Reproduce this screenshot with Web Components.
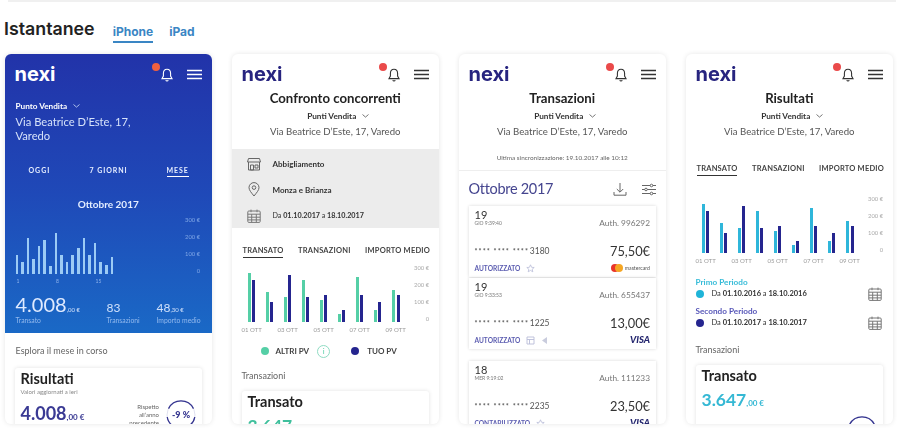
<!DOCTYPE html>
<html lang="it">
<head>
<meta charset="utf-8">
<title>Istantanee</title>
<style>
  html, body { margin: 0; background: #fff; }
  body { font-family: Lato, "Open Sans", sans-serif; width: 900px; height: 441px; overflow: hidden; }
  .hero { background: linear-gradient(180deg, #2233a9 0%, #1f49b8 50%, #1a69c6 100%); color: #fff; height: 279px; }
</style>
</head>
<body>
<shots-page>
  <shot-card>
    <div class="hero">
      <app-head dark></app-head>
      <hero-summary></hero-summary>
    </div>
    <section-label top="12" left="11">Esplora il mese in corso</section-label>
    <result-card top="11" title="Risultati" sub="Valori aggiornati a ieri" value="4.008" cents=",00 €" colour="#3a3a94" size="18" delta></result-card>
  </shot-card>

  <shot-card>
    <app-head></app-head>
    <store-head title="Confronto concorrenti"></store-head>
    <filter-band></filter-band>
    <metric-tabs top="16"></metric-tabs>
    <pair-chart top="4" colour="#55cfa6"></pair-chart>
    <chart-legend></chart-legend>
    <section-label top="12" left="10">Transazioni</section-label>
    <result-card top="9" title="Transato" value="3.647" cents=",00 €" colour="#3fbf9c" size="17.5"></result-card>
  </shot-card>

  <shot-card>
    <app-head></app-head>
    <store-head title="Transazioni"></store-head>
    <sync-bar></sync-bar>
    <month-title></month-title>
    <txn-card day="19" time="GIO 9:39:40" auth="Auth. 996292" pan="3180" amount="75,50€" status="AUTORIZZATO" brand="mc"></txn-card>
    <txn-card day="19" time="GIO 9:33:53" auth="Auth. 655437" pan="1225" amount="13,00€" status="AUTORIZZATO" brand="visa" top="1" extra></txn-card>
    <txn-card day="18" time="MER 9:19:02" auth="Auth. 111233" pan="2235" amount="23,50€" status="CONTABILIZZATO" brand="visa" top="12"></txn-card>
  </shot-card>

  <shot-card>
    <app-head></app-head>
    <store-head title="Risultati"></store-head>
    <metric-tabs top="23"></metric-tabs>
    <pair-chart top="17" colour="#2fb6da"></pair-chart>
    <period-list></period-list>
    <section-label top="14" left="10">Transazioni</section-label>
    <result-card top="9" title="Transato" value="3.647" cents=",00 €" colour="#35b8d4" size="17.5" ring></result-card>
  </shot-card>
</shots-page>

<script>
const CAL = `<svg width="14" height="14" viewBox="0 0 14 14" fill="none" stroke="#777" stroke-width="1"><rect x=".8" y="2" width="12.4" height="11.4" rx="1"/><path d="M.8 5.2h12.4M4 .6v2.6M10 .6v2.6M4.7 5.2v8.2M9.3 5.2v8.2M.8 8.2h12.4M.8 10.9h12.4"/></svg>`;
const chev = c => `<svg width="7" height="4" viewBox="0 0 7 4" fill="none" stroke="${c}" stroke-width=".8" style="margin-left:6px;vertical-align:1px"><path d="M.5.5l3 2.6 3-2.6"/></svg>`;

class ShotsPage extends HTMLElement{
  constructor(){
    super();
    this.attachShadow({mode:'open'});
    this.shadowRoot.innerHTML = `
    <style>
      :host { display: block; }
      .top { height: 2px; margin-left: 8px; margin-right: 4px; background: #f0f0f0; }
      header { display: flex; align-items: center; height: 36px; margin-top: 9px; padding-left: 4px; }
      h1 { margin: 0; font: 600 17.8px/36px Inter, sans-serif; color: #222; }
      nav { display: flex; gap: 16px; margin-left: 18px; margin-top: 8px; }
      a { font: 700 12px/16px Inter, sans-serif; color: #3a86c4; padding-bottom: 1px; border-bottom: 2px solid transparent; }
      a.on { border-bottom-color: #3a86c4; }
      .row { display: flex; gap: 19.5px; margin-top: 7px; padding-left: 4.5px; }
    </style>
    <div class="top"></div>
    <header><h1>Istantanee</h1><nav><a class="on">iPhone</a><a>iPad</a></nav></header>
    <div class="row"><slot></slot></div>`;
  }
}
customElements.define('shots-page', ShotsPage);

class ShotCard extends HTMLElement{
  constructor(){
    super();
    this.attachShadow({mode:'open'});
    this.shadowRoot.innerHTML = `
    <style>
      :host { display: block; flex: none; width: 207.5px; height: 370px; overflow: hidden; border-radius: 6px; background: #fff;
              box-shadow: 0 0 5px rgba(0,0,0,.10); color: #333; filter: blur(.35px); }
    </style>
    <slot></slot>`;
  }
}
customElements.define('shot-card', ShotCard);

class AppHead extends HTMLElement{
  constructor(){
    super();
    this.attachShadow({mode:'open'});
  }
  connectedCallback(){
    const dark = this.hasAttribute('dark');
    const ink = dark ? '#fff' : '#333';
    this.shadowRoot.innerHTML = `
    <style>
      :host { display: flex; align-items: center; height: 36px; box-sizing: border-box; padding: 3px 10px 0 10px; }
      .logo { font: 700 20px/22px Inter, sans-serif; color: ${dark ? '#fff' : '#27247f'}; }
      .bell { position: relative; margin-left: auto; margin-right: 14px; width: 12px; height: 14px; margin-top: 2px; }
      .bell i { position: absolute; left: -9px; top: -5px; width: 8px; height: 8px; border-radius: 50%; background: ${dark ? '#f0603f' : '#ea4a4a'}; }
      svg { display: block; }
      .burger { margin-top: 1px; }
    </style>
    <span class="logo">nexi</span>
    <span class="bell"><svg width="12" height="14" viewBox="0 0 12 14" fill="none" stroke="${ink}" stroke-width="1.1"><path d="M6 1.2c-2.4 0-3.6 1.9-3.6 4.2v2.7L1 10.6h10L9.6 8.1V5.4C9.6 3.1 8.4 1.2 6 1.2zM4.7 12.3c.6 1 2 1 2.6 0"/></svg><i></i></span>
    <svg class="burger" width="15" height="11" viewBox="0 0 15 11" stroke="${ink}" stroke-width="1.7"><path d="M0 1.5h15M0 5.5h15M0 9.5h15"/></svg>`;
  }
}
customElements.define('app-head', AppHead);

class StoreHead extends HTMLElement{
  constructor(){
    super();
    this.attachShadow({mode:'open'});
  }
  connectedCallback(){
    this.shadowRoot.innerHTML = `
    <style>
      :host { display: block; text-align: center; }
      h2 { margin: 0; font: 700 13.2px/16px Lato, sans-serif; color: #222; }
      .pv { margin-top: 4px; font: 700 8.2px/12px Lato, sans-serif; color: #333; padding-left: 6px; }
      .ad { margin-top: 3px; font: 400 9.6px/14px Lato, sans-serif; color: #555; }
    </style>
    <h2>${this.getAttribute('title')}</h2>
    <div class="pv">Punti Vendita${chev('#555')}</div>
    <div class="ad">Via Beatrice D’Este, 17, Varedo</div>`;
  }
}
customElements.define('store-head', StoreHead);

class MonthBars extends HTMLElement{
  constructor(){
    super();
    this.attachShadow({mode:'open'});
    const h = [19,12,36,15,28,34,8,41,19,12,19,26,36,19,31,12,9,17];
    this.shadowRoot.innerHTML = `
    <style>
      :host { display: flex; align-items: flex-end; gap: 3.1px; height: 60px; }
      i { display: block; width: 2.5px; background: #9ccbf5; }
    </style>
    ${h.map(v => `<i style="height:${v}px"></i>`).join('')}`;
  }
}
customElements.define('month-bars', MonthBars);

class YAxis extends HTMLElement{
  constructor(){
    super();
    this.attachShadow({mode:'open'});
    this.shadowRoot.innerHTML = `
    <style>
      :host { display: flex; flex-direction: column; gap: 9px; padding-top: 2px; height: 60px; box-sizing: border-box;
              margin-left: auto; text-align: right; font: 400 5.8px/8px Lato, sans-serif; color: inherit; }
    </style>
    <span>300 €</span><span>200 €</span><span>100 €</span><span>0</span>`;
  }
}
customElements.define('y-axis', YAxis);

class HeroSummary extends HTMLElement{
  constructor(){
    super();
    this.attachShadow({mode:'open'});
    this.shadowRoot.innerHTML = `
    <style>
      :host { display: block; }
      .pv { margin: 10px 0 0 11px; font: 700 8.2px/12px Lato, sans-serif; }
      .ad { margin: 3px 0 0 11px; font: 400 11.2px/14px Lato, sans-serif; color: #d6e2fa; }
      .tabs { display: flex; margin: 21px 0 0 0; font: 700 7px/12px Lato, sans-serif; letter-spacing: .95px; padding-left: 24px; color: #e6eeff; }
      .tabs span:nth-child(1) { width: 61px; }
      .tabs span:nth-child(2) { width: 77px; }
      .tabs span:nth-child(3) { border-bottom: 1px solid #fff; height: 12px; }
      .mon { margin-top: 20px; text-align: center; font: 700 10px/14px Lato, sans-serif; color: #e3edff; }
      .plot { display: flex; margin-top: 3px; padding: 0 12px 0 11px; color: #7fa6e6; }
      .days { height: 8px; margin-top: 3px; font: 400 5px/8px Lato, sans-serif; color: #8fb4ec; display: flex; padding-left: 12px; }
      .days span { width: 39.5px; }
      .nums { display: flex; align-items: baseline; margin-top: 7px; padding-left: 11px; font: 400 12px/24px Lato, sans-serif; color: #cfe0fb; height: 24px; }
      .nums b { font: 400 20px/24px Lato, sans-serif; color: #dfeaff; }
      small { font-size: 6px; }
      .nums .a { width: 91px; } .nums .b { width: 50px; }
      .labs { display: flex; padding-left: 11px; font: 400 6.8px/8px Lato, sans-serif; color: #92b9ee; }
      .labs .a { width: 91px; } .labs .b { width: 50px; }
    </style>
    <div class="pv">Punto Vendita${chev('#cfe0fb')}</div>
    <div class="ad">Via Beatrice D’Este, 17,<br>Varedo</div>
    <div class="tabs"><span>OGGI</span><span>7 GIORNI</span><span>MESE</span></div>
    <div class="mon">Ottobre 2017</div>
    <div class="plot"><month-bars></month-bars><y-axis></y-axis></div>
    <div class="days"><span>1</span><span>8</span><span>15</span></div>
    <div class="nums"><span class="a"><b>4.008</b><small>,00 €</small></span><span class="b">83</span><span>48<small>,30 €</small></span></div>
    <div class="labs"><span class="a">Transato</span><span class="b">Transazioni</span><span>Importo medio</span></div>`;
  }
}
customElements.define('hero-summary', HeroSummary);

class SectionLabel extends HTMLElement{
  constructor(){
    super();
    this.attachShadow({mode:'open'});
  }
  connectedCallback(){
    this.shadowRoot.innerHTML = `
    <style>
      :host { display: block; margin: ${this.getAttribute('top')}px 0 0 ${this.getAttribute('left')}px; font: 400 9px/12px Lato, sans-serif; color: #666; }
    </style>
    <slot></slot>`;
  }
}
customElements.define('section-label', SectionLabel);

class ResultCard extends HTMLElement{
  constructor(){
    super();
    this.attachShadow({mode:'open'});
  }
  connectedCallback(){
    const a = n => this.getAttribute(n);
    const delta = this.hasAttribute('delta');
    const ring = `<svg width="30" height="30" viewBox="0 0 30 30" fill="none"><circle cx="15" cy="15" r="14" stroke="#dfe0ef"/><path d="M2.5 8.6A14 14 0 0 1 27.5 8.6" stroke="#34348f" stroke-width="1.3"/>${delta ? '<path d="M1.2 17A14 14 0 0 0 28.8 17" stroke="#34348f" stroke-width="1.3"/>' : ''}</svg>`;
    this.shadowRoot.innerHTML = `
    <style>
      :host { display: block; margin: ${a('top')}px 10px 0 10px; padding: 2px 0 6px 6px; box-shadow: 0 0 4px rgba(0,0,0,.12); border-radius: 3px; background: #fff; }
      h3 { margin: 0; font: 700 14.5px/18px Lato, sans-serif; color: #222; }
      .sub { font: 400 6px/8px Lato, sans-serif; color: #888; }
      .row { display: flex; align-items: center; height: 30px; margin-top: ${delta ? 4 : 1}px; padding-right: 6px; }
      .val { font: 700 ${a('size')}px/24px Lato, sans-serif; color: ${a('colour')}; }
      .val small { font-size: 8px; }
      .note { margin-left: auto; width: 40px; text-align: right; font: 400 6px/8px Lato, sans-serif; color: #666; }
      .ring { position: relative; width: 30px; height: 30px; margin-left: 7px; font: 900 9px/30px Lato, sans-serif; text-align: center; color: #34348f; }
      .ring svg { position: absolute; left: 0; top: 0; }
      .under { display: flex; justify-content: flex-end; padding-right: 6px; }
    </style>
    <h3>${a('title')}</h3>
    ${a('sub') ? `<div class="sub">${a('sub')}</div>` : ''}
    <div class="row">
      <span class="val">${a('value')}<small>${a('cents')}</small></span>
      ${delta ? `<span class="note">Rispetto all’anno precedente</span><span class="ring">${ring}-9 %</span>` : ''}
    </div>
    ${this.hasAttribute('ring') ? `<div class="under">${ring}</div>` : ''}`;
  }
}
customElements.define('result-card', ResultCard);

class FilterBand extends HTMLElement{
  constructor(){
    super();
    this.attachShadow({mode:'open'});
    const st = `<svg width="14" height="14" viewBox="0 0 14 14" fill="none" stroke="#666" stroke-width="1"><path d="M1.5 1.5h11l1 3.5H.5zM1.5 5v8h11V5M3.5 8h3v5h-3zM8 8h3v3H8z"/></svg>`;
    const pin = `<svg width="14" height="15" viewBox="0 0 14 15" fill="none" stroke="#666" stroke-width="1"><path d="M7 14C4.5 10.8 2 8.3 2 5.6a5 5 0 0 1 10 0C12 8.3 9.5 10.8 7 14z"/><circle cx="7" cy="5.6" r="1.8"/></svg>`;
    this.shadowRoot.innerHTML = `
    <style>
      :host { display: flex; flex-direction: column; justify-content: space-between; height: 79px; box-sizing: border-box; margin-top: 10px; padding: 7px 0 5px 15px;
              background: #ececec; font: 700 8px/14px Lato, sans-serif; color: #333; }
      div { display: flex; align-items: center; gap: 12px; height: 15px; }
      .date { font-size: 7.2px; }
      em { font-style: normal; font-weight: 400; }
    </style>
    <div>${st}<span>Abbigliamento</span></div>
    <div>${pin}<span>Monza e Brianza</span></div>
    <div>${CAL}<span class="date"><em>Da</em> 01.10.2017 <em>a</em> 18.10.2017</span></div>`;
  }
}
customElements.define('filter-band', FilterBand);

class MetricTabs extends HTMLElement{
  constructor(){
    super();
    this.attachShadow({mode:'open'});
  }
  connectedCallback(){
    this.shadowRoot.innerHTML = `
    <style>
      :host { display: flex; justify-content: space-between; height: 14px; margin-top: ${this.getAttribute('top')}px; padding: 0 9px 0 10px;
              font: 700 7.5px/14px Lato, sans-serif; letter-spacing: .2px; color: #444; }
      .on { border-bottom: 1px solid #333; }
      span:nth-child(2) { margin-left: 1px; }
    </style>
    <span class="on">TRANSATO</span><span>TRANSAZIONI</span><span>IMPORTO MEDIO</span>`;
  }
}
customElements.define('metric-tabs', MetricTabs);

class PairChart extends HTMLElement{
  constructor(){
    super();
    this.attachShadow({mode:'open'});
  }
  connectedCallback(){
    const data = [[49,42],[30,20],[25,47],[42,25],[22,27],[8,12],[45,27],[12,20],[32,27]];
    const c = this.getAttribute('colour');
    this.shadowRoot.innerHTML = `
    <style>
      :host { display: block; margin-top: ${this.getAttribute('top')}px; }
      .plot { display: flex; height: 60px; padding: 0 10px 0 16px; color: #aaa; }
      .pair { display: flex; align-items: flex-end; gap: 1.4px; width: 18.08px; flex: none; }
      .pair i { display: block; width: 3px; }
      .days { display: flex; height: 8px; margin-top: 4px; padding-left: 10px; font: 400 6px/8px Lato, sans-serif; color: #999; }
      .days span { width: 36px; }
    </style>
    <div class="plot">
      ${data.map(p => `<div class="pair"><i style="height:${p[0]}px;background:${c}"></i><i style="height:${p[1]}px;background:#25258f"></i></div>`).join('')}
      <y-axis></y-axis>
    </div>
    <div class="days"><span>01 OTT</span><span>03 OTT</span><span>05 OTT</span><span>07 OTT</span><span>09 OTT</span></div>`;
  }
}
customElements.define('pair-chart', PairChart);

class ChartLegend extends HTMLElement{
  constructor(){
    super();
    this.attachShadow({mode:'open'});
    this.shadowRoot.innerHTML = `
    <style>
      :host { display: flex; align-items: center; height: 14px; margin-top: 10px; padding-left: 29px; font: 700 8px/14px Lato, sans-serif; color: #444; }
      i { width: 8px; height: 8px; border-radius: 50%; margin-right: 7px; }
      .info { width: 13px; height: 13px; box-sizing: border-box; border: 1px solid #8fdcc3; border-radius: 50%; margin: 0 0 0 8px; font: 400 8px/11px Lato, sans-serif; text-align: center; color: #55cfa6; }
    </style>
    <i style="background:#55cfa6"></i><span>ALTRI PV</span><span class="info">i</span>
    <i style="background:#25258f;margin-left:21px;margin-right:8px"></i><span>TUO PV</span>`;
  }
}
customElements.define('chart-legend', ChartLegend);

class SyncBar extends HTMLElement{
  constructor(){
    super();
    this.attachShadow({mode:'open'});
    this.shadowRoot.innerHTML = `
    <style>
      :host { display: block; margin-top: 15px; padding-bottom: 8px; border-bottom: 1px solid #eee; text-align: center; font: 400 6.4px/8px Lato, sans-serif; color: #666; }
    </style>
    Ultima sincronizzazione: 19.10.2017 alle 10:12`;
  }
}
customElements.define('sync-bar', SyncBar);

class MonthTitle extends HTMLElement{
  constructor(){
    super();
    this.attachShadow({mode:'open'});
    this.shadowRoot.innerHTML = `
    <style>
      :host { display: flex; align-items: center; height: 22px; margin-top: 7px; padding: 0 10px; font: 400 14.5px/22px Lato, sans-serif; letter-spacing: -.3px; color: #45458f; }
      span { margin-right: auto; }
      svg { display: block; margin-left: 15px; }
    </style>
    <span>Ottobre 2017</span>
    <svg width="14" height="15" viewBox="0 0 14 15" fill="none" stroke="#666" stroke-width="1"><path d="M7 1v9M3.8 7L7 10.2 10.2 7M1 10v3.2h12V10"/></svg>
    <svg width="14" height="13" viewBox="0 0 14 13" fill="none" stroke="#666" stroke-width="1"><path d="M0 2.5h14M0 6.5h14M0 10.5h14"/><circle cx="9.5" cy="2.5" r="1.3" fill="#fff"/><circle cx="4" cy="6.5" r="1.3" fill="#fff"/><circle cx="9.5" cy="10.5" r="1.3" fill="#fff"/></svg>`;
  }
}
customElements.define('month-title', MonthTitle);

class TxnCard extends HTMLElement{
  constructor(){
    super();
    this.attachShadow({mode:'open'});
  }
  connectedCallback(){
    const a = n => this.getAttribute(n);
    const brand = a('brand') === 'mc'
      ? `<span class="mc"><i></i><i></i><em>mastercard</em></span>`
      : `<span class="visa">VISA</span>`;
    const box = `<svg width="9" height="9" viewBox="0 0 9 9" fill="none" stroke="#b9bcd8" stroke-width=".9"><path d="M1 1h7v7H1zM1 3.5h7M3.5 3.5V8"/></svg>`;
    const star = `<svg width="9" height="9" viewBox="0 0 9 9" fill="none" stroke="#b9bcd8" stroke-width=".8"><path d="M4.5.8l1.1 2.5 2.6.2-2 1.700.6 2.600-2.300-1.400-2.300 1.400.6-2.600-2-1.700 2.600-.2z"/></svg>`;
    const cone = `<svg width="7" height="9" viewBox="0 0 7 9" fill="#c9ccdd"><path d="M6 1v7L1 4.5z"/></svg>`;
    this.shadowRoot.innerHTML = `
    <style>
      :host { display: block; box-sizing: border-box; height: 71px; margin: ${a('top') || 6}px 10px 0 10px; padding: 3px 6px 0 6px; box-shadow: 0 0 3px rgba(0,0,0,.16); background: #fff; }
      .top { display: flex; justify-content: space-between; height: 19px; }
      .day { font: 400 11px/12px Lato, sans-serif; color: #333; }
      .time { font: 400 5px/7px Lato, sans-serif; color: #777; margin-top: -1px; }
      .auth { font: 400 8.3px/10px Lato, sans-serif; color: #777; align-self: flex-end; }
      .mid { display: flex; justify-content: space-between; align-items: center; height: 18px; margin-top: 14px; }
      .pan { font: 700 7px/18px Lato, sans-serif; color: #555; letter-spacing: 1.1px; }
      .pan b { font: 400 8.5px/18px Lato, sans-serif; letter-spacing: 0; margin-left: -2px; }
      .amt { font: 400 12.8px/18px Lato, sans-serif; color: #333; }
      .bot { display: flex; align-items: center; gap: 6px; height: 12px; margin-top: 2px; font: 700 6.6px/12px Lato, sans-serif; color: #5b5cb0; }
      .bot > span:last-child { margin-left: auto; }
      .visa { font: italic 900 9.5px/12px Lato, sans-serif; color: #25276f; }
      .mc { display: flex; align-items: center; font: 400 5.2px/12px Lato, sans-serif; color: #555; }
      .mc i { width: 8px; height: 8px; border-radius: 50%; background: #e8342a; }
      .mc i + i { background: #f5a623; margin-left: -4px; margin-right: 2px; }
      .mc em { font-style: normal; }
    </style>
    <div class="top">
      <div><div class="day">${a('day')}</div><div class="time">${a('time')}</div></div>
      <div class="auth">${a('auth')}</div>
    </div>
    <div class="mid"><span class="pan">**** **** **** <b>${a('pan')}</b></span><span class="amt">${a('amount')}</span></div>
    <div class="bot"><span>${a('status')}</span>${this.hasAttribute('extra') ? box + cone : star}${brand}</div>`;
  }
}
customElements.define('txn-card', TxnCard);

class PeriodList extends HTMLElement{
  constructor(){
    super();
    this.attachShadow({mode:'open'});
    const row = (lab, col, labcol, from, to, top) => `
      <div class="lab" style="color:${labcol};margin-top:${top}px">${lab}</div>
      <div class="row"><i style="background:${col}"></i><span><em>Da</em> ${from} <em>a</em> ${to}</span>${CAL}</div>`;
    this.shadowRoot.innerHTML = `
    <style>
      :host { display: block; padding: 0 11px 0 10px; }
      .lab { font: 700 8.2px/10px Lato, sans-serif; }
      .row { display: flex; align-items: center; height: 14px; font: 700 7.5px/14px Lato, sans-serif; color: #333; }
      i { width: 8px; height: 8px; border-radius: 50%; margin-right: 8px; }
      em { font-style: normal; font-weight: 400; }
      svg { display: block; margin-left: auto; }
    </style>
    ${row('Primo Periodo', '#1fb4d8', '#37bcd8', '01.10.2016', '18.10.2016', 12)}
    ${row('Secondo Periodo', '#25258f', '#5656b8', '01.10.2017', '18.10.2017', 5)}`;
  }
}
customElements.define('period-list', PeriodList);
</script>
</body>
</html>
